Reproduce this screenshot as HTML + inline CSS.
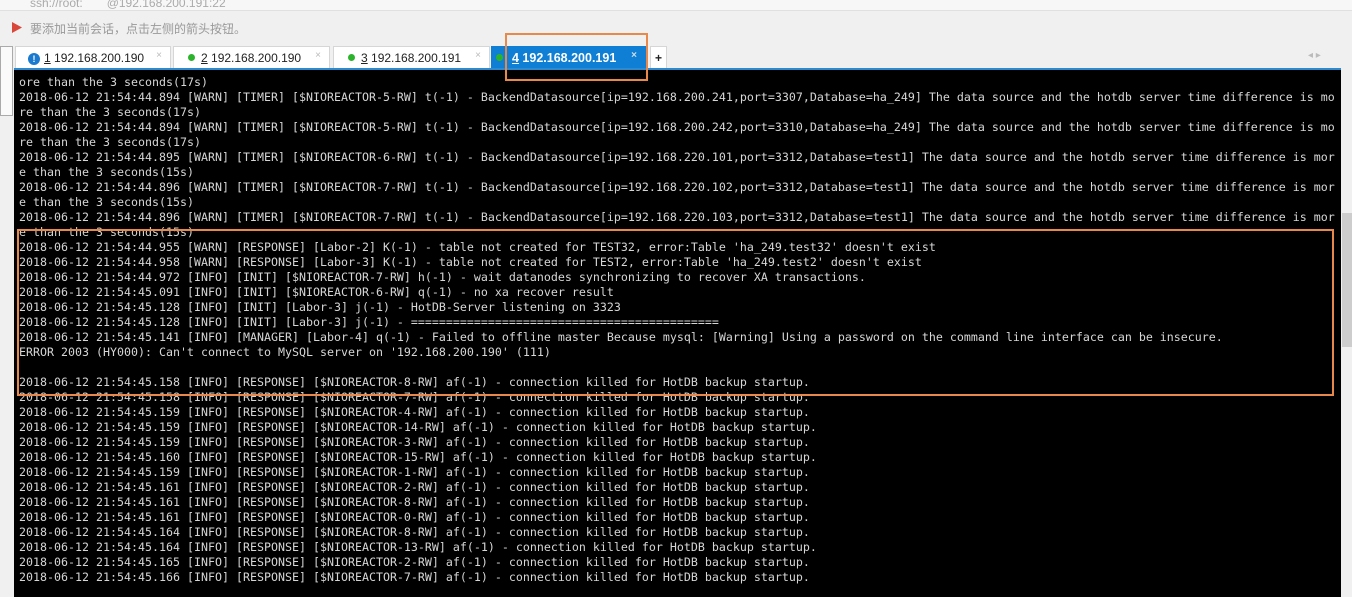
<!DOCTYPE html>
<html><head><meta charset="utf-8"><style>
body{margin:0;width:1352px;height:597px;overflow:hidden;background:#f0f0f0;font-family:"Liberation Sans","Noto Sans CJK SC",sans-serif;position:relative}
.top{position:absolute;left:0;top:0;width:1352px;height:10px;background:#f7f7f7;border-bottom:1px solid #e0e0e0;font-size:12px;color:#aaa;overflow:hidden}
.top span{position:absolute;top:-6px;left:30px}
.hint{position:absolute;left:30px;top:20px;font-size:12px;color:#999}
.flag{position:absolute;left:12px;top:22px;width:10px;height:11px;background:#d9473b;clip-path:polygon(0 0,100% 50%,0 100%)}
.tab{position:absolute;top:46px;height:22px;background:#fff;border:1px solid #d6d6d6;border-bottom:none;font-size:12px;color:#222;line-height:22px;box-sizing:border-box}
.tab .x{position:absolute;right:8px;top:-2px;color:#bbb;font-size:10px}
.dot{display:inline-block;width:7px;height:7px;border-radius:50%;background:#2bb32b;margin:0 6px 1px 14px}
.act{background:#0e7fd4;color:#fff;font-weight:bold;border-color:#0e7fd4}
.term{position:absolute;left:14px;top:68px;width:1327px;height:529px;background:#000;border-top:2px solid #2e8ad0;box-sizing:border-box}
pre{margin:0;position:absolute;left:5px;top:5px;font-family:"DejaVu Sans Mono",monospace;font-size:11.63px;line-height:15px;color:#d6d6d6}
.sb{position:absolute;left:1341px;top:69px;width:11px;height:528px;background:#f0f0f0}
.thumb{position:absolute;left:1342px;top:213px;width:10px;height:134px;background:#cdcdcd}
.box{position:absolute;border:2px solid #e8884a;box-sizing:border-box}
.side{position:absolute;left:0;top:46px;width:13px;height:70px;border:1px solid #aaa;background:#fafafa;box-sizing:border-box}
</style></head><body>
<div class="top"><span>ssh://root:　　@192.168.200.191:22</span></div>
<div class="flag"></div>
<div class="hint">要添加当前会话，点击左侧的箭头按钮。</div>
<div class="side"></div>
<div class="tab" style="left:15px;width:156px"><span style="display:inline-block;width:12px;height:12px;border-radius:50%;background:#1a7ad0;color:#fff;font-size:9px;line-height:12px;text-align:center;margin:0 4px 0 12px;font-weight:bold">!</span><u>1</u> 192.168.200.190<span class="x">×</span></div>
<div class="tab" style="left:173px;width:157px"><span class="dot"></span><u>2</u> 192.168.200.190<span class="x">×</span></div>
<div class="tab" style="left:333px;width:157px"><span class="dot"></span><u>3</u> 192.168.200.191<span class="x">×</span></div>
<div class="tab act" style="left:491px;width:155px;height:23px;font-size:12.5px"><span class="dot" style="margin-left:4px;margin-right:9px"></span><u>4</u> 192.168.200.191<span class="x" style="color:#cde">×</span></div>
<div class="tab" style="left:650px;width:17px;text-align:center;font-weight:bold">+</div>
<div style="position:absolute;left:1308px;top:50px;font-size:10px;color:#bbb">◂ ▸</div>
<div class="term"><pre>ore than the 3 seconds(17s)
2018-06-12 21:54:44.894 [WARN] [TIMER] [$NIOREACTOR-5-RW] t(-1) - BackendDatasource[ip=192.168.200.241,port=3307,Database=ha_249] The data source and the hotdb server time difference is mo
re than the 3 seconds(17s)
2018-06-12 21:54:44.894 [WARN] [TIMER] [$NIOREACTOR-5-RW] t(-1) - BackendDatasource[ip=192.168.200.242,port=3310,Database=ha_249] The data source and the hotdb server time difference is mo
re than the 3 seconds(17s)
2018-06-12 21:54:44.895 [WARN] [TIMER] [$NIOREACTOR-6-RW] t(-1) - BackendDatasource[ip=192.168.220.101,port=3312,Database=test1] The data source and the hotdb server time difference is mor
e than the 3 seconds(15s)
2018-06-12 21:54:44.896 [WARN] [TIMER] [$NIOREACTOR-7-RW] t(-1) - BackendDatasource[ip=192.168.220.102,port=3312,Database=test1] The data source and the hotdb server time difference is mor
e than the 3 seconds(15s)
2018-06-12 21:54:44.896 [WARN] [TIMER] [$NIOREACTOR-7-RW] t(-1) - BackendDatasource[ip=192.168.220.103,port=3312,Database=test1] The data source and the hotdb server time difference is mor
e than the 3 seconds(15s)
2018-06-12 21:54:44.955 [WARN] [RESPONSE] [Labor-2] K(-1) - table not created for TEST32, error:Table 'ha_249.test32' doesn't exist
2018-06-12 21:54:44.958 [WARN] [RESPONSE] [Labor-3] K(-1) - table not created for TEST2, error:Table 'ha_249.test2' doesn't exist
2018-06-12 21:54:44.972 [INFO] [INIT] [$NIOREACTOR-7-RW] h(-1) - wait datanodes synchronizing to recover XA transactions.
2018-06-12 21:54:45.091 [INFO] [INIT] [$NIOREACTOR-6-RW] q(-1) - no xa recover result
2018-06-12 21:54:45.128 [INFO] [INIT] [Labor-3] j(-1) - HotDB-Server listening on 3323
2018-06-12 21:54:45.128 [INFO] [INIT] [Labor-3] j(-1) - ============================================
2018-06-12 21:54:45.141 [INFO] [MANAGER] [Labor-4] q(-1) - Failed to offline master Because mysql: [Warning] Using a password on the command line interface can be insecure.
ERROR 2003 (HY000): Can't connect to MySQL server on '192.168.200.190' (111)

2018-06-12 21:54:45.158 [INFO] [RESPONSE] [$NIOREACTOR-8-RW] af(-1) - connection killed for HotDB backup startup.
2018-06-12 21:54:45.158 [INFO] [RESPONSE] [$NIOREACTOR-7-RW] af(-1) - connection killed for HotDB backup startup.
2018-06-12 21:54:45.159 [INFO] [RESPONSE] [$NIOREACTOR-4-RW] af(-1) - connection killed for HotDB backup startup.
2018-06-12 21:54:45.159 [INFO] [RESPONSE] [$NIOREACTOR-14-RW] af(-1) - connection killed for HotDB backup startup.
2018-06-12 21:54:45.159 [INFO] [RESPONSE] [$NIOREACTOR-3-RW] af(-1) - connection killed for HotDB backup startup.
2018-06-12 21:54:45.160 [INFO] [RESPONSE] [$NIOREACTOR-15-RW] af(-1) - connection killed for HotDB backup startup.
2018-06-12 21:54:45.159 [INFO] [RESPONSE] [$NIOREACTOR-1-RW] af(-1) - connection killed for HotDB backup startup.
2018-06-12 21:54:45.161 [INFO] [RESPONSE] [$NIOREACTOR-2-RW] af(-1) - connection killed for HotDB backup startup.
2018-06-12 21:54:45.161 [INFO] [RESPONSE] [$NIOREACTOR-8-RW] af(-1) - connection killed for HotDB backup startup.
2018-06-12 21:54:45.161 [INFO] [RESPONSE] [$NIOREACTOR-0-RW] af(-1) - connection killed for HotDB backup startup.
2018-06-12 21:54:45.164 [INFO] [RESPONSE] [$NIOREACTOR-8-RW] af(-1) - connection killed for HotDB backup startup.
2018-06-12 21:54:45.164 [INFO] [RESPONSE] [$NIOREACTOR-13-RW] af(-1) - connection killed for HotDB backup startup.
2018-06-12 21:54:45.165 [INFO] [RESPONSE] [$NIOREACTOR-2-RW] af(-1) - connection killed for HotDB backup startup.
2018-06-12 21:54:45.166 [INFO] [RESPONSE] [$NIOREACTOR-7-RW] af(-1) - connection killed for HotDB backup startup.</pre></div>
<div class="sb"></div><div class="thumb"></div>
<div class="box" style="left:505px;top:33px;width:143px;height:48px"></div>
<div class="box" style="left:17px;top:229px;width:1317px;height:167px"></div>
</body></html>
